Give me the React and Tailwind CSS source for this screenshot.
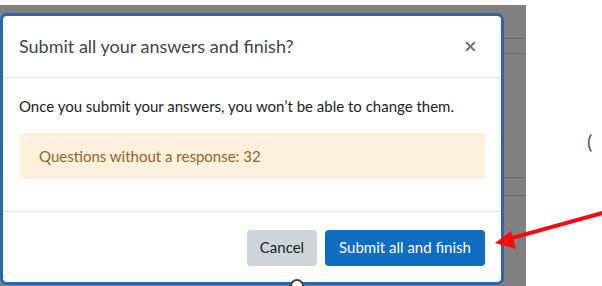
import { X } from "lucide-react";

export default function App() {
  return (
    <div
      className="w-[602px] h-[286px] bg-white relative overflow-hidden flex"
      style={{ fontFamily: 'Lato, "Noto Sans", sans-serif' }}
    >
      {/* dimmed page behind the dialog */}
      <div className="w-[526px] mt-[5px] bg-[#808080] relative">
        <div className="mt-[33px] h-[16px] border-y border-[#6b6b6b]" />
        <div className="mt-[123px] h-[19px] border-y border-[#6b6b6b]" />

        {/* dialog */}
        <div className="absolute top-[8px] left-0 w-[504px] h-[272px] bg-white border-[3px] border-[#2a68ad] rounded-[7px] flex flex-col">
          <div className="h-[62px] shrink-0 flex items-center justify-between px-[16px] border-b border-[#dee2e6]">
            <h5 className="text-[18px] text-[#3f454a] font-normal whitespace-nowrap">
              Submit all your answers and finish?
            </h5>
            <X className="w-[15px] h-[15px] text-[#6a737b] mr-[7px]" strokeWidth={3.2} />
          </div>

          <div className="p-[16px] border-b border-[#dee2e6]">
            <p className="text-[15px] leading-[22px] text-[#1d2125] mt-[1px] whitespace-nowrap">
              Once you submit your answers, you won’t be able to change them.
            </p>
            <div className="mt-[16px] mb-[16px] rounded-[4px] bg-[#fcefdc] px-[20px] py-[12px] text-[15px] leading-[22px] text-[#8e662e]">
              Questions without a response: 32
            </div>
          </div>

          <div className="flex-1 flex items-center justify-end gap-[8px] px-[16px] pt-[1px]">
            <button className="h-[36px] w-[70px] rounded-[4px] bg-[#ced4da] text-[15px] text-[#1d2125]">
              Cancel
            </button>
            <button className="h-[36px] w-[160px] rounded-[4px] bg-[#0f6cbf] text-[15px] text-white">
              Submit all and finish
            </button>
          </div>
        </div>
      </div>

      {/* page to the right */}
      <div className="flex-1 relative">
        <span className="absolute left-[61px] top-[126px] text-[20px] text-[#555]">(</span>
      </div>

      {/* resize handle */}
      <div className="absolute left-[290px] top-[279px] w-[14px] h-[14px] rounded-full bg-white border-2 border-[#444]" />

      {/* red annotation arrow */}
      <svg className="absolute inset-0 pointer-events-none" width="602" height="286">
        <line x1="610" y1="211" x2="508" y2="239" stroke="#f20d0d" strokeWidth="4" />
        <polygon points="495,243 511,231 516,249" fill="#f20d0d" />
      </svg>
    </div>
  );
}
